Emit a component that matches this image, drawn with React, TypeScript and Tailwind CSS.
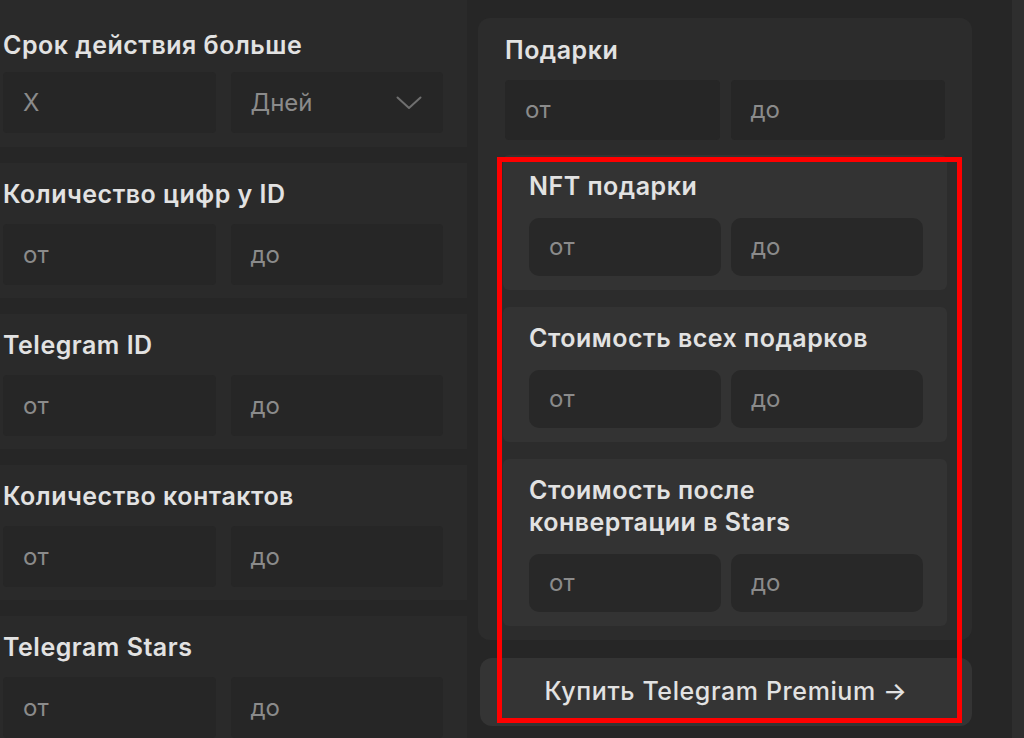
import { ReactNode } from 'react'

const font = { fontFamily: 'Inter, "Noto Sans", sans-serif' }

function Chevron() {
  return (
    <svg width="26" height="14" viewBox="0 0 26 14" fill="none" className="shrink-0">
      <path d="M1.5 1.5 L13 12 L24.5 1.5" stroke="#6f6f6f" strokeWidth="2" strokeLinecap="round" strokeLinejoin="round" />
    </svg>
  )
}

// квадратное поле в левой колонке и в блоке "Подарки"
function FlatInput({ text, h = 'h-[61px]', right }: { text: string; h?: string; right?: ReactNode }) {
  return (
    <div className={`${h} bg-[#262626] rounded-sm flex items-center justify-between pl-5 pr-[21px] text-[24px] text-[#8b8b8b]`}>
      <span>{text}</span>
      {right}
    </div>
  )
}

function LeftCard({ title, children, first }: { title: string; children: ReactNode; first?: boolean }) {
  return (
    <div className={`${first ? 'h-[147px] pt-[31px]' : 'h-[135px] pt-[17px]'} shrink-0 bg-[#2a2a2a] pl-[3px] pr-[24px]`}>
      <div className="h-7 leading-7 text-[25px] tracking-[0.5px] font-semibold text-[#e2e2e2] whitespace-nowrap">{title}</div>
      <div className={`${first ? 'mt-[13px]' : 'mt-4'} grid grid-cols-2 gap-[15px]`}>{children}</div>
    </div>
  )
}

function RangeLeft({ title }: { title: string }) {
  return (
    <LeftCard title={title}>
      <FlatInput text="от" />
      <FlatInput text="до" />
    </LeftCard>
  )
}

function NestedCard({ title }: { title: ReactNode }) {
  return (
    <div className="bg-[#333333] rounded-md pl-[26px] pr-[24px] pt-[15px] pb-[14px]">
      <div className="leading-8 text-[25px] tracking-[0.5px] font-semibold text-[#e2e2e2]">{title}</div>
      <div className="mt-4 grid grid-cols-2 gap-[10px]">
        <div className="h-[58px] rounded-[10px] bg-[#282828] flex items-center pl-5 text-[24px] text-[#8b8b8b]">от</div>
        <div className="h-[58px] rounded-[10px] bg-[#282828] flex items-center pl-5 text-[24px] text-[#8b8b8b]">до</div>
      </div>
    </div>
  )
}

export default function App() {
  return (
    <div style={font} className="relative w-[1024px] h-[738px] overflow-hidden bg-[#262626] flex">
      {/* левая колонка */}
      <div className="w-[467px] shrink-0 flex flex-col gap-4">
        <LeftCard title="Срок действия больше" first>
          <FlatInput text="X" />
          <FlatInput text="Дней" right={<Chevron />} />
        </LeftCard>
        <RangeLeft title="Количество цифр у ID" />
        <RangeLeft title="Telegram ID" />
        <RangeLeft title="Количество контактов" />
        <RangeLeft title="Telegram Stars" />
      </div>

      {/* правая колонка */}
      <div className="ml-[11px] w-[494px] shrink-0 pt-[18px] flex flex-col">
        <div className="bg-[#2c2c2c] rounded-xl px-[27px] pt-4 pb-[14px]">
          <div className="leading-8 text-[25px] tracking-[0.5px] font-semibold text-[#e2e2e2]">Подарки</div>
          <div className="mt-[14px] grid grid-cols-2 gap-[11px]">
            <FlatInput text="от" h="h-[60px]" />
            <FlatInput text="до" h="h-[60px]" />
          </div>
          <div className="-mx-[2px] mt-[15px] flex flex-col gap-[17px]">
            <NestedCard title="NFT подарки" />
            <NestedCard title="Стоимость всех подарков" />
            <NestedCard title={<>Стоимость после<br />конвертации в Stars</>} />
          </div>
        </div>
        <div className="mt-[18px] ml-[2px] h-[68px] shrink-0 rounded-xl bg-[#343434] flex items-center justify-center text-[25px] tracking-[0.6px] font-medium text-[#e2e2e2]">
          Купить Telegram Premium →
        </div>
      </div>

      <div className="flex-1" />
      <div className="w-3 shrink-0 bg-[#2e2e2e]" />

      {/* красная рамка выделения */}
      <div className="absolute left-[497px] top-[157px] w-[465px] h-[566px] border-[5px] border-[#ff0000] pointer-events-none" />
    </div>
  )
}
